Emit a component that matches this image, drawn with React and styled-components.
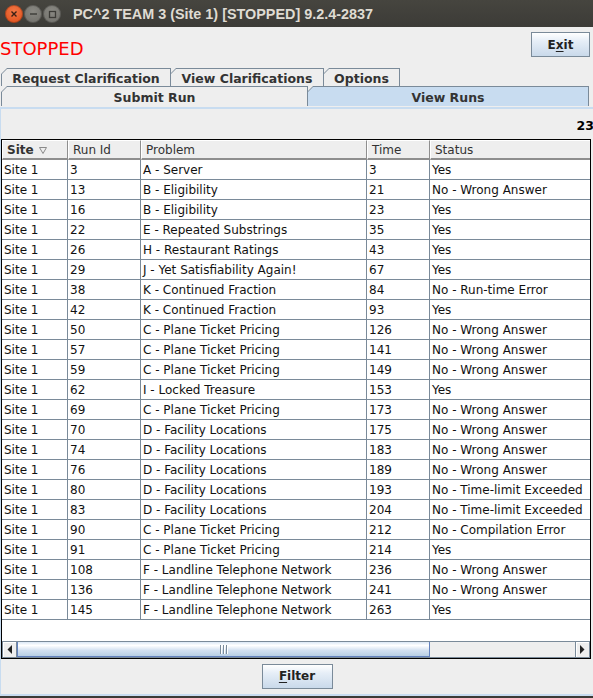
import styled, { createGlobalStyle } from "styled-components";

const GlobalStyle = createGlobalStyle`
  html, body {
    margin: 0;
    padding: 0;
    background: #eeeeee;
  }
  body {
    font-family: "DejaVu Sans", sans-serif;
    font-size: 12px;
    color: #000;
  }
`

const runs = [
  ["3", "A - Server", "3", "Yes"],
  ["13", "B - Eligibility", "21", "No - Wrong Answer"],
  ["16", "B - Eligibility", "23", "Yes"],
  ["22", "E - Repeated Substrings", "35", "Yes"],
  ["26", "H - Restaurant Ratings", "43", "Yes"],
  ["29", "J - Yet Satisfiability Again!", "67", "Yes"],
  ["38", "K - Continued Fraction", "84", "No - Run-time Error"],
  ["42", "K - Continued Fraction", "93", "Yes"],
  ["50", "C - Plane Ticket Pricing", "126", "No - Wrong Answer"],
  ["57", "C - Plane Ticket Pricing", "141", "No - Wrong Answer"],
  ["59", "C - Plane Ticket Pricing", "149", "No - Wrong Answer"],
  ["62", "I - Locked Treasure", "153", "Yes"],
  ["69", "C - Plane Ticket Pricing", "173", "No - Wrong Answer"],
  ["70", "D - Facility Locations", "175", "No - Wrong Answer"],
  ["74", "D - Facility Locations", "183", "No - Wrong Answer"],
  ["76", "D - Facility Locations", "189", "No - Wrong Answer"],
  ["80", "D - Facility Locations", "193", "No - Time-limit Exceeded"],
  ["83", "D - Facility Locations", "204", "No - Time-limit Exceeded"],
  ["90", "C - Plane Ticket Pricing", "212", "No - Compilation Error"],
  ["91", "C - Plane Ticket Pricing", "214", "Yes"],
  ["108", "F - Landline Telephone Network", "236", "No - Wrong Answer"],
  ["136", "F - Landline Telephone Network", "241", "No - Wrong Answer"],
  ["145", "F - Landline Telephone Network", "263", "Yes"],
];

const COLS = "66px 73px 226px 63px 1fr";

const Window = styled.div`
  width: 593px;
  height: 698px;
  display: flex;
  flex-direction: column;
  overflow: hidden;
  background: #eeeeee;
`

const TitleBar = styled.div`
  height: 27px;
  flex: none;
  display: flex;
  align-items: center;
  padding-left: 5px;
  background: linear-gradient(#46453f, #3c3b37);
  color: #dfdbd2;
  font-family: "Liberation Sans", sans-serif;
  font-weight: 700;
  font-size: 14.4px;
`

const WinButtons = styled.div`
  display: flex;
  gap: 1px;
  margin-right: 12px;
  margin-top: 1px;
`

const WinButton = styled.span`
  width: 18px;
  height: 18px;
  border-radius: 50%;
  display: flex;
  align-items: center;
  justify-content: center;
  background: ${p => p.$close
    ? "radial-gradient(circle at 50% 35%, #f07746, #df4b16)"
    : "radial-gradient(circle at 50% 35%, #8a8983, #6d6c67)"};
  box-shadow: inset 0 0 0 1px rgba(0,0,0,0.25);
`

const TopRow = styled.div`
  height: 41px;
  flex: none;
  display: flex;
  align-items: flex-start;
  justify-content: space-between;
`

const StatusLabel = styled.div`
  color: #ff0000;
  font-size: 18px;
  margin-top: 11px;
`

const Button = styled.button`
  width: ${p => p.$w}px;
  height: 25px;
  margin: ${p => p.$m};
  padding: 0;
  border: 1px solid #7a8a99;
  background: linear-gradient(#ffffff 0%, #e6eef7 35%, #c9d9ea 100%);
  font-family: "DejaVu Sans", sans-serif;
  font-weight: 700;
  font-size: 12px;
  color: #222;
  u { text-decoration-thickness: 1px; text-underline-offset: 2px; }
`

const TabRow = styled.div`
  height: ${p => p.$h}px;
  flex: none;
  display: flex;
  padding-left: 1px;
  align-items: stretch;
`

const Tab = styled.div`
  width: ${p => p.$w}px;
  flex: none;
  background: #7a8a99;
  padding: 1px 1px 0 1px;
  clip-path: polygon(6px 0, 100% 0, 100% 100%, 0 100%, 0 6px);
  box-sizing: border-box;
  margin-left: -1px;
  &:first-child { margin-left: 0; }
`

const TabInner = styled.div`
  height: 100%;
  display: flex;
  align-items: center;
  justify-content: center;
  background: ${p => p.$selected ? "#c8dcf0" : "#eeeeee"};
  clip-path: polygon(5px 0, 100% 0, 100% 100%, 0 100%, 0 5px);
  font-weight: 700;
  font-size: 12.5px;
  color: #333;
  padding-top: 1px;
`

const Panel = styled.div`
  flex: 1;
  display: flex;
  flex-direction: column;
  border-top: 2px solid #c8dcf0;
  border-left: 1px solid #c8dcf0;
  border-bottom: 2px solid #c8dcf0;
  margin-top: 1px;
  margin-bottom: 2px;
  position: relative;
  &::after {
    content: "";
    position: absolute;
    left: -1px;
    right: 0;
    bottom: -4px;
    height: 2px;
    background: #3c3b37;
  }
`

const CountRow = styled.div`
  height: 30px;
  flex: none;
  display: flex;
  align-items: center;
  justify-content: flex-end;
  font-weight: 700;
  font-size: 12.5px;
  margin-right: -1px;
  padding-top: 2px;
  box-sizing: border-box;
`

const TableBox = styled.div`
  height: 520px;
  flex: none;
  width: 590px;
  border: 1px solid #000;
  box-sizing: border-box;
  display: flex;
  flex-direction: column;
  background: #fff;
`

const HeaderRow = styled.div`
  display: grid;
  grid-template-columns: ${COLS};
  height: 20px;
  flex: none;
  background: #eeeeee;
`

const HeaderCell = styled.div`
  display: flex;
  align-items: center;
  gap: 5px;
  padding-left: 4px;
  border-left: 1px solid #fff;
  border-top: 1px solid #fff;
  border-right: 1px solid #8e8e8e;
  border-bottom: 2px solid #8e8e8e;
  font-weight: ${p => p.$sorted ? 700 : 400};
  color: #333;
  font-size: 12px;
  &:last-child { border-right: none; }
`

const SortArrow = styled.svg`
  width: 8px;
  height: 7px;
  margin-top: 1px;
`

const Rows = styled.div`
  flex: 1;
  overflow: hidden;
`

const Row = styled.div`
  display: grid;
  grid-template-columns: ${COLS};
  height: 20px;
`

const Cell = styled.div`
  display: flex;
  align-items: center;
  padding-left: 2px;
  border-right: 1px solid #7a8a99;
  border-bottom: 1px solid #7a8a99;
  white-space: nowrap;
  overflow: hidden;
  color: #111;
  font-size: 12px;
  &:last-child { border-right: none; }
`

const ScrollBar = styled.div`
  height: 17px;
  flex: none;
  display: flex;
  background: #eeeeee;
  border-top: 1px solid #7a8a99;
  box-sizing: border-box;
`

const ArrowButton = styled.div`
  width: 15px;
  flex: none;
  display: flex;
  align-items: center;
  justify-content: center;
  background: #eeeeee;
  border: 1px solid #7a8a99;
  border-top: none;
  box-shadow: inset 1px 1px 0 #fff;
  box-sizing: border-box;
`

const Track = styled.div`
  flex: 1;
  display: flex;
  border-bottom: 1px solid #7a8a99;
`

const Thumb = styled.div`
  width: ${p => p.$w}px;
  flex: none;
  display: flex;
  align-items: center;
  justify-content: center;
  gap: 1px;
  border: 1px solid #6382bf;
  border-top: none;
  box-sizing: border-box;
  background: linear-gradient(#dce8f6 0%, #ffffff 25%, #d2e0f1 60%, #b8cfe5 100%);
`

const Grip = styled.span`
  width: 1px;
  height: 9px;
  background: #7a8a99;
  box-shadow: 1px 0 0 #fff;
  margin-right: 1px;
`

const BottomRow = styled.div`
  flex: 1;
  display: flex;
  justify-content: center;
  align-items: center;
  padding-bottom: 1px;
`

const tabsTop = [
  ["Request Clarification", 170],
  ["View Clarifications", 154],
  ["Options", 77],
];

const tabsBottom = [
  ["Submit Run", 307, false],
  ["View Runs", 282, true],
];

const headers = ["Site", "Run Id", "Problem", "Time", "Status"];

const App = () => {
  return (
    <>
      <GlobalStyle />
      <Window>
        <TitleBar>
          <WinButtons>
            <WinButton $close>
              <svg width="8" height="8" viewBox="0 0 8 8">
                <path d="M1.5 1.5 L6.5 6.5 M6.5 1.5 L1.5 6.5" stroke="#3a2015" strokeWidth="1.4" />
              </svg>
            </WinButton>
            <WinButton>
              <svg width="9" height="8" viewBox="0 0 9 8">
                <path d="M1 4 H8" stroke="#3c3b37" strokeWidth="1.4" />
              </svg>
            </WinButton>
            <WinButton>
              <svg width="9" height="9" viewBox="0 0 9 9">
                <rect x="1.5" y="1.5" width="6" height="6" fill="none" stroke="#3c3b37" strokeWidth="1.3" />
              </svg>
            </WinButton>
          </WinButtons>
          PC^2 TEAM 3 (Site 1) [STOPPED] 9.2.4-2837
        </TitleBar>
        <TopRow>
          <StatusLabel>STOPPED</StatusLabel>
          <Button $w={59} $m="5px 3px 0 0">E<u>x</u>it</Button>
        </TopRow>
        <TabRow $h={18}>
          {tabsTop.map(([label, w]) => (
            <Tab key={label} $w={w}>
              <TabInner>{label}</TabInner>
            </Tab>
          ))}
        </TabRow>
        <TabRow $h={20}>
          {tabsBottom.map(([label, w, sel]) => (
            <Tab key={label} $w={w}>
              <TabInner $selected={sel}>{label}</TabInner>
            </Tab>
          ))}
        </TabRow>
        <Panel>
          <CountRow>23</CountRow>
          <TableBox>
            <HeaderRow>
              {headers.map((h, i) => (
                <HeaderCell key={h} $sorted={i === 0}>
                  {h}
                  {i === 0 && (
                    <SortArrow viewBox="0 0 8 7">
                      <path d="M0.5 0.5 H7.5 L4 6.5 Z" fill="none" stroke="#8a8a8a" strokeWidth="1" />
                    </SortArrow>
                  )}
                </HeaderCell>
              ))}
            </HeaderRow>
            <Rows>
              {runs.map(([id, problem, time, status]) => (
                <Row key={id}>
                  <Cell>Site 1</Cell>
                  <Cell>{id}</Cell>
                  <Cell>{problem}</Cell>
                  <Cell>{time}</Cell>
                  <Cell>{status}</Cell>
                </Row>
              ))}
            </Rows>
            <ScrollBar>
              <ArrowButton>
                <svg width="5" height="9" viewBox="0 0 5 9">
                  <path d="M5 0 V9 L0.5 4.5 Z" fill="#222" />
                </svg>
              </ArrowButton>
              <Track>
                <Thumb $w={413}>
                  <Grip /><Grip /><Grip />
                </Thumb>
              </Track>
              <ArrowButton>
                <svg width="5" height="9" viewBox="0 0 5 9">
                  <path d="M0 0 V9 L4.5 4.5 Z" fill="#222" />
                </svg>
              </ArrowButton>
            </ScrollBar>
          </TableBox>
          <BottomRow>
            <Button $w={71}><u>F</u>ilter</Button>
          </BottomRow>
        </Panel>
      </Window>
    </>
  );
}

export default App;
